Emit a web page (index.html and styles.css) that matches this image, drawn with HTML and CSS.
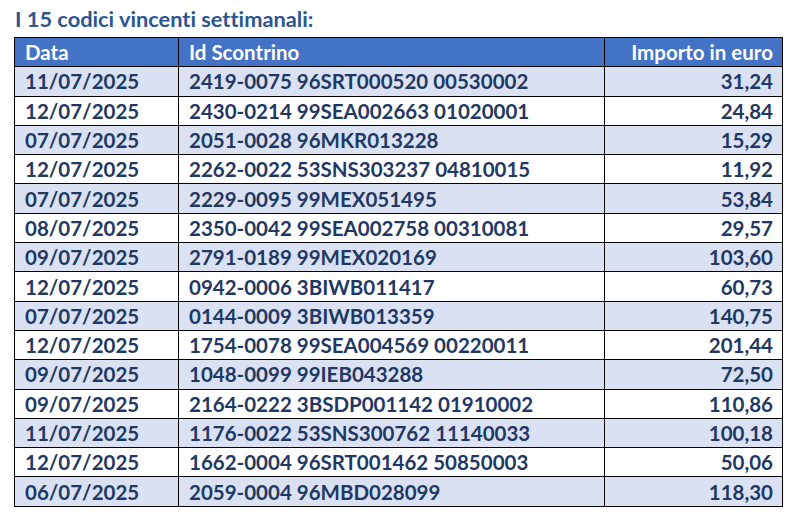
FILE: index.html
```html
<!DOCTYPE html>
<html lang="it">
<head>
<meta charset="utf-8">
<link rel="stylesheet" href="styles.css">
</head>
<body>
<div class="page">
  <h1 class="title">I 15 codici vincenti settimanali:</h1>
  <table class="codes">
    <thead>
      <tr><th class="c-date">Data</th><th class="c-id">Id Scontrino</th><th class="c-amt">Importo in euro</th></tr>
    </thead>
    <tbody>
      <tr><td>11/07/2025</td><td>2419-0075 96SRT000520 00530002</td><td class="amt">31,24</td></tr>
      <tr><td>12/07/2025</td><td>2430-0214 99SEA002663 01020001</td><td class="amt">24,84</td></tr>
      <tr><td>07/07/2025</td><td>2051-0028 96MKR013228</td><td class="amt">15,29</td></tr>
      <tr><td>12/07/2025</td><td>2262-0022 53SNS303237 04810015</td><td class="amt">11,92</td></tr>
      <tr><td>07/07/2025</td><td>2229-0095 99MEX051495</td><td class="amt">53,84</td></tr>
      <tr><td>08/07/2025</td><td>2350-0042 99SEA002758 00310081</td><td class="amt">29,57</td></tr>
      <tr><td>09/07/2025</td><td>2791-0189 99MEX020169</td><td class="amt">103,60</td></tr>
      <tr><td>12/07/2025</td><td>0942-0006 3BIWB011417</td><td class="amt">60,73</td></tr>
      <tr><td>07/07/2025</td><td>0144-0009 3BIWB013359</td><td class="amt">140,75</td></tr>
      <tr><td>12/07/2025</td><td>1754-0078 99SEA004569 00220011</td><td class="amt">201,44</td></tr>
      <tr><td>09/07/2025</td><td>1048-0099 99IEB043288</td><td class="amt">72,50</td></tr>
      <tr><td>09/07/2025</td><td>2164-0222 3BSDP001142 01910002</td><td class="amt">110,86</td></tr>
      <tr><td>11/07/2025</td><td>1176-0022 53SNS300762 11140033</td><td class="amt">100,18</td></tr>
      <tr><td>12/07/2025</td><td>1662-0004 96SRT001462 50850003</td><td class="amt">50,06</td></tr>
      <tr><td>06/07/2025</td><td>2059-0004 96MBD028099</td><td class="amt">118,30</td></tr>
    </tbody>
  </table>
</div>
</body>
</html>
```
FILE: styles.css
```css
html, body {
  margin: 0;
  padding: 0;
  background: #ffffff;
}
.page {
  padding: 6px 9px 0 14px;
  font-family: Lato, "Open Sans", sans-serif;
  font-weight: 700;
  font-variant-ligatures: none;
}
.title {
  margin: 0 0 6px 1px;
  font-size: 21.8px;
  line-height: 25px;
  font-weight: 700;
  color: #2c5592;
}
.codes {
  border-collapse: collapse;
  width: 769px;
  table-layout: fixed;
  color: #1f3864;
  font-size: 20.5px;
}
.codes th, .codes td {
  border: 1px solid #000;
  height: 28.3px;
  padding: 0 9px 0 10px;
  text-align: left;
  font-weight: 700;
  white-space: nowrap;
  line-height: 22px;
}
.codes th {
  background: #4472c4;
  color: #ffffff;
}
.c-date { width: 144px; }
.c-id { width: 406px; }
.codes th.c-amt, .codes td.amt { text-align: right; }
.codes tbody tr:nth-child(odd) td { background: #d9e1f2; }
```
